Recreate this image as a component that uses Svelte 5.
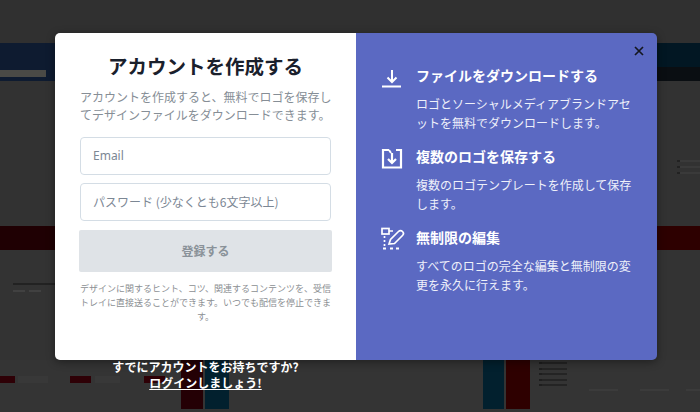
<script>
  const features = [
    { title: 'ファイルをダウンロードする', text: 'ロゴとソーシャルメディアブランドアセットを無料でダウンロードします。', icon: 'download' },
    { title: '複数のロゴを保存する', text: '複数のロゴテンプレートを作成して保存します。', icon: 'save' },
    { title: '無制限の編集', text: 'すべてのロゴの完全な編集と無制限の変更を永久に行えます。', icon: 'edit' }
  ];
</script>

<div class="page">
  <div class="bg">
    <div class="band-top"></div>
    <div class="band-nav">
      <div class="nav-left"><span class="nav-bar"></span></div>
      <div class="nav-right"></div>
    </div>
    <div class="row-a">
      <div class="dots"><i></i><i></i><i></i></div>
    </div>
    <div class="band-red"><div class="red-l"></div><div class="red-r"></div></div>
    <div class="row-b">
      <div class="marks"><span class="m-long"></span><span class="m-short"></span><span class="m-short"></span></div>
    </div>
    <div class="strip">
      <span class="tile w15"></span><span class="pale w30"></span>
      <span class="tile w21 a"></span><span class="pale w25"></span>
      <span class="tile w21 b"></span>
      <span class="col c1"></span><span class="col c2"></span>
      <span class="col c3"></span><span class="col c4"></span>
      <div class="list"><i></i><i></i><i></i><i></i><i></i></div>
      <div class="card"></div><div class="card"></div><div class="card last"></div>
    </div>
  </div>

  <div class="overlay">
    <div class="modal">
      <section class="left">
        <h1>アカウントを作成する</h1>
        <p class="lead">アカウントを作成すると、無料でロゴを保存してデザインファイルをダウンロードできます。</p>
        <div class="field email">Email</div>
        <div class="field pass">パスワード (少なくとも6文字以上)</div>
        <div class="submit">登録する</div>
        <p class="fine">デザインに関するヒント、コツ、関連するコンテンツを、受信トレイに直接送ることができます。いつでも配信を停止できます。</p>
      </section>
      <section class="right">
        <svg class="close" viewBox="0 0 12 12" width="12" height="12"><path d="M2 2l8 8M10 2l-8 8" stroke="#14171f" stroke-width="1.7" fill="none"/></svg>
        {#each features as f}
          <div class="feature">
            <div class="icon">
              {#if f.icon === 'download'}
                <svg viewBox="0 0 22 24" width="22" height="24"><path d="M11 5v12M6.5 12.5l4.5 4.5 4.5-4.5" stroke="#fff" stroke-width="2" fill="none"/><path d="M1 21.5h19" stroke="#fff" stroke-width="2"/></svg>
              {:else if f.icon === 'save'}
                <svg viewBox="0 0 22 24" width="22" height="24"><path d="M8 4H2v17.5h18V4h-5" stroke="#fff" stroke-width="2.2" fill="none"/><path d="M8 4l2 3" stroke="#fff" stroke-width="2" fill="none"/><path d="M11 7v10M7 13l4 4 4-4" stroke="#fff" stroke-width="2.2" fill="none"/></svg>
              {:else}
                <svg viewBox="0 0 24 24" width="24" height="24"><rect x="1" y="1.5" width="7" height="5.5" fill="none" stroke="#fff" stroke-width="1.7"/><path d="M8 4h4" stroke="#fff" stroke-width="1.7"/><path d="M3.5 9v2M3.5 13v2M3.5 17v2" stroke="#fff" stroke-width="1.7"/><path d="M8 17l1.5-4.5 8-8a2 2 0 0 1 4 4l-8 8z" fill="none" stroke="#fff" stroke-width="1.7"/><path d="M2 21.5h3M9 21.5h3M15 21.5h3" stroke="#fff" stroke-width="2"/></svg>
              {/if}
            </div>
            <div class="copy">
              <h2>{f.title}</h2>
              <p>{f.text}</p>
            </div>
          </div>
        {/each}
      </section>
    </div>
    <div class="login">
      <div>すでにアカウントをお持ちですか?</div>
      <div class="link">ログインしましょう!</div>
    </div>
  </div>
</div>

<style>
  :global(body) { margin: 0; background: #333; }
  .page {
    position: relative; width: 700px; height: 412px; overflow: hidden;
    font-family: "Noto Sans CJK JP", "Noto Sans", sans-serif;
  }
  .bg { height: 100%; background: #343434; display: flex; flex-direction: column; }
  .band-top { height: 43px; background: #303030; }
  .band-nav { height: 38px; display: flex; }
  .nav-left { width: 55px; background: #0e1b30; display: flex; align-items: flex-end; padding-bottom: 4px; box-sizing: border-box; }
  .nav-bar { width: 46px; height: 7px; background: #4a4a46; }
  .nav-right { flex: 1; background: linear-gradient(#021723 0 24px, #0a0e12 24px); }
  .row-a { height: 145px; background: #323232; box-sizing: border-box; padding: 79px 0 0 677px; }
  .dots { display: flex; flex-direction: column; gap: 4px; }
  .dots i { display: block; width: 23px; height: 2px; background: linear-gradient(90deg, #222 0 3px, #3a3a3a 3px); }
  .band-red { height: 24px; display: flex; }
  .red-l { width: 300px; background: #1f0003; }
  .red-r { flex: 1; background: #2d0000; }
  .row-b { height: 110px; background: #333; box-sizing: border-box; padding: 33px 0 0 13px; }
  .marks { display: flex; flex-wrap: wrap; width: 42px; column-gap: 4px; row-gap: 5px; }
  .m-long { width: 42px; height: 2px; background: #222; }
  .m-short { width: 12px; height: 2px; background: #414141; }

  .strip { flex: 1; display: flex; align-items: flex-start; background: #343434; }
  .tile, .pale { height: 7px; margin-top: 16px; flex: none; }
  .tile { background: #2e0006; }
  .pale { background: #383838; margin-left: 3px; }
  .w15 { width: 15px; }
  .w21 { width: 21px; }
  .w25 { width: 25px; margin-left: 4px; }
  .w30 { width: 30px; }
  .a { margin-left: 22px; }
  .b { margin-left: 24px; }
  .col { height: 49px; flex: none; }
  .c1 { width: 22px; margin-left: 16px; background: #240005; }
  .c2 { width: 24px; margin-left: 2px; background: #02202e; }
  .c3 { width: 21px; margin-left: 254px; background: #02202e; }
  .c4 { width: 24px; margin-left: 2px; background: #2e0000; }
  .list { margin: 2px 0 0 9px; display: flex; flex-direction: column; gap: 3.5px; flex: none; }
  .list i { display: block; width: 28px; height: 2px; background: linear-gradient(90deg, #1e1e1e 0 3px, #242424 3px); }
  .card { width: 29px; margin: 29px 0 0 22px; height: 2px; background: #3b3b3b; flex: none; }
  .card.last { width: 29px; margin-left: 17px; }

  .overlay {
    position: absolute; inset: 0; box-sizing: border-box; padding: 33px 43px 0 55px;
    display: flex; flex-direction: column;
  }
  .modal {
    height: 327px; display: flex; border-radius: 5px; overflow: hidden; flex: none;
    box-shadow: 0 2px 8px rgba(0,0,0,.4);
  }
  .left {
    width: 301px; background: #fff; box-sizing: border-box; padding: 18px 25px 0; text-align: center;
  }
  h1 { margin: 0 0 7px; font-size: 19.5px; line-height: 30px; font-weight: 700; color: #1a202c; }
  .lead { margin: 0 -2px 13px 0; font-size: 12px; line-height: 18px; color: #868e96; text-align: left; }
  .field {
    height: 38px; box-sizing: border-box; border: 1px solid #d4dde5; border-radius: 4px; text-align: left;
    padding: 0 12px; font-size: 12px; line-height: 36px; color: #7c8794; margin-bottom: 8px;
  }
  .email { font-family: "Noto Sans", sans-serif; }
  .submit {
    height: 42px; background: #dfe3e7; border-radius: 2px; font-size: 12px; line-height: 41px; color: #8a9299;
    font-weight: 700; margin: 9px -1px 0;
  }
  .fine { margin: 10px -1px 0; font-size: 9px; line-height: 14px; color: #8c8f93; }
  .right {
    position: relative; flex: 1; background: #5b69c2; color: #fff; padding: 32px 24px 0 26px; box-sizing: border-box;
  }
  .close { position: absolute; top: 12px; right: 12px; }
  .feature { display: flex; margin-bottom: 14px; }
  .icon { width: 34px; flex: none; height: 24px; margin-left: -1px; margin-right: 1px; }
  h2 { margin: -1px 0 8px; font-size: 14px; line-height: 22px; font-weight: 700; }
  .copy p { margin: 0; font-size: 12px; line-height: 19px; color: #eef0fa; }
  .login {
    width: 301px; margin-top: -1px; color: #fff; font-size: 12px; line-height: 16px; font-weight: 700; text-align: center;
  }
  .link { text-decoration: underline; }
</style>
